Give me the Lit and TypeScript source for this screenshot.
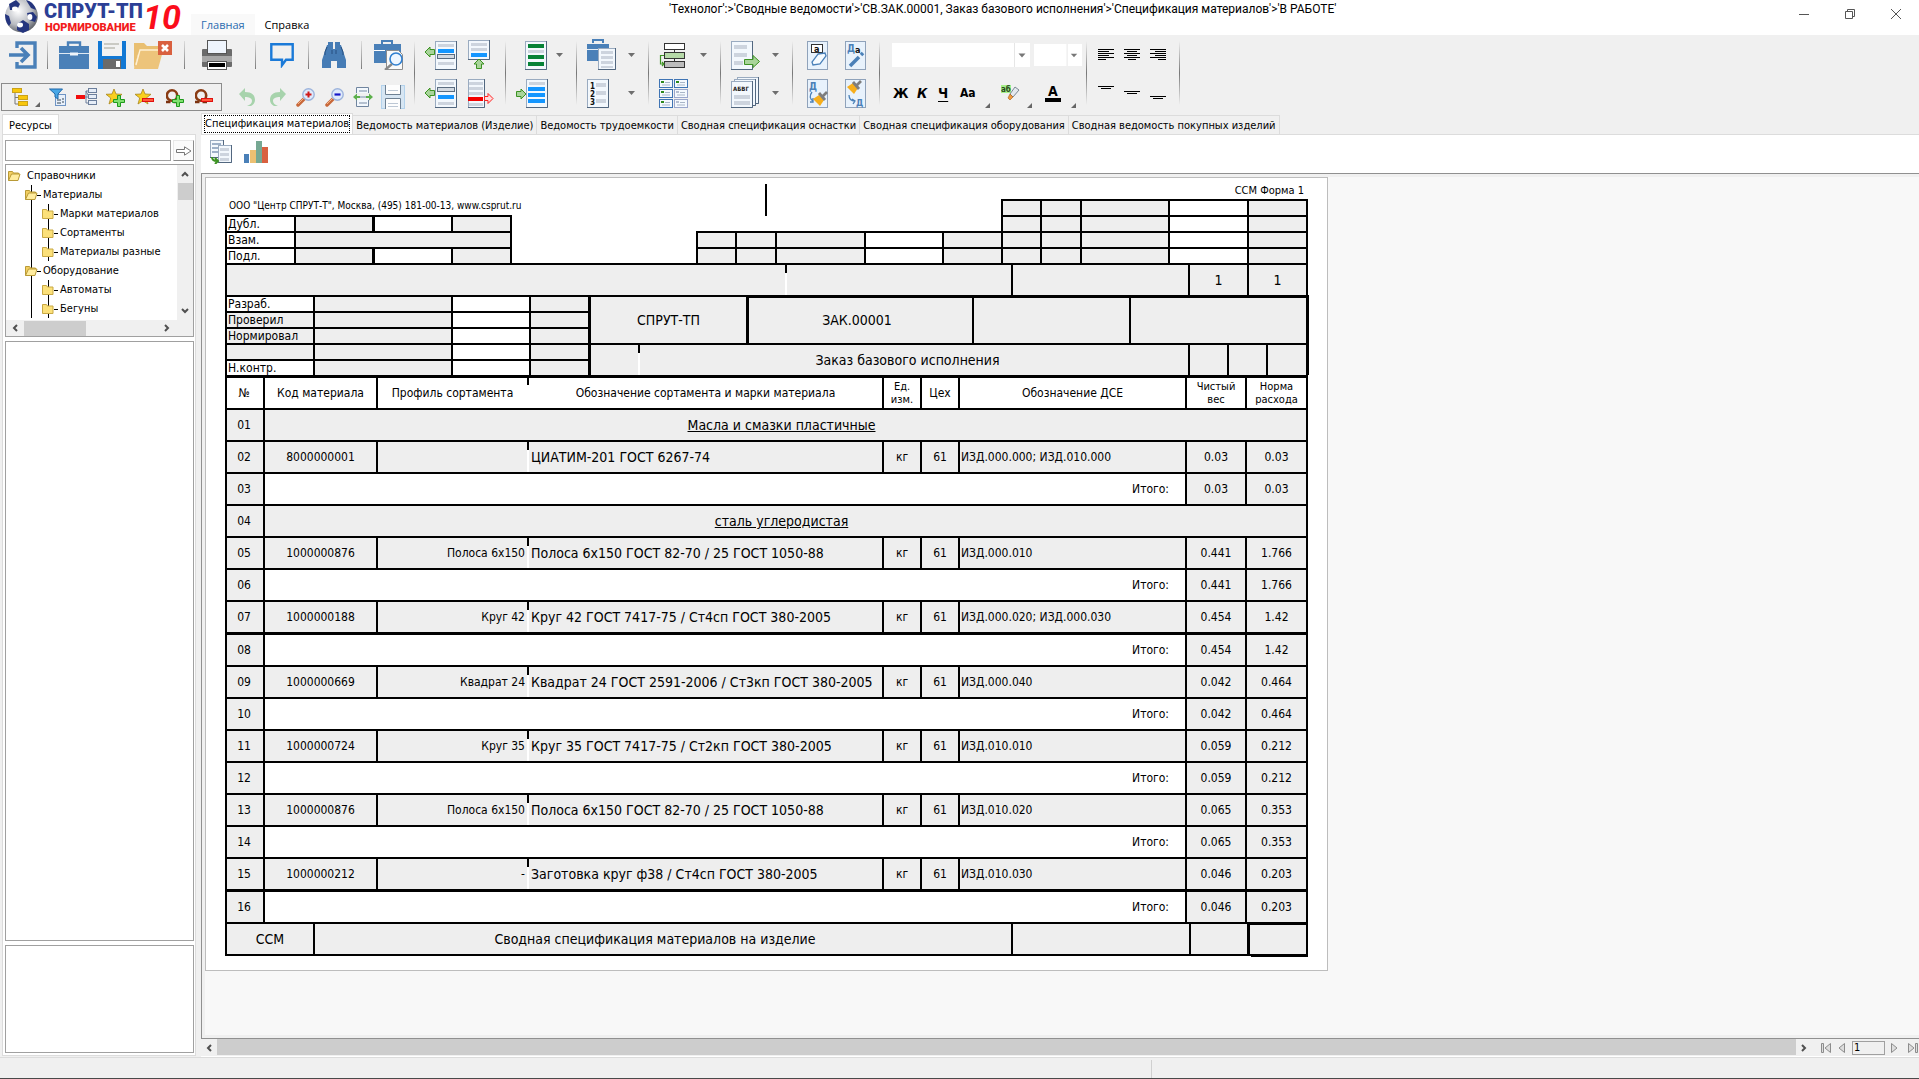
import { LitElement, html, css, svg, nothing, type TemplateResult } from "lit";
import { customElement, property, state } from "lit/decorators.js";
import { classMap } from "lit/directives/class-map.js";

type Icon = { w: number; h: number; body: TemplateResult };

/* ---------- icon drawings ---------- */

const page = (x: number, y: number, w: number, h: number) => svg`
  <rect x=${x + 0.5} y=${y + 0.5} width=${w - 1} height=${h - 1} fill="#f3f8fd" stroke="#9aabc0"/>
  <path d="M${x + w - 0.5} ${y}V${y + h - 0.5}H${x}" fill="none" stroke="#52677f"/>`;
const bar = (x: number, y: number, w: number, c = "#cdd4de", h = 3) =>
  svg`<rect x=${x} y=${y} width=${w} height=${h} fill=${c}/>`;
const greenArrow = (x: number, y: number, turn = 0) =>
  svg`<path transform="translate(${x} ${y}) rotate(${turn})" d="M-4.500 -2.500H0V-5L5 0 0 5V2.500H-4.500Z" fill="#a9d49b" stroke="#3c9222"/>`;
const plus = (x: number, y: number) =>
  svg`<path d="M${x - 1.5} ${y - 5.5}h3v4h4v3h-4v4h-3v-4h-4v-3h4z" fill="#7fe06f" stroke="#1f9a1c"/>`;
const minus = (x: number, y: number) =>
  svg`<rect x=${x - 5.5} y=${y - 1.5} width="11" height="3" fill="#ff5a3c" stroke="#e01010"/>`;
const star = svg`<path d="M8 1l2 5 6 .3-4.700 3.700 1.700 6-5-3.300L3 16l1.700-6L0 6.300 6 6z" fill="#f9cf1e" stroke="#a8861f" stroke-width=".8"/>`;
const ring = svg`<path d="M0 14h4.500M7.500 14h4.500" stroke="#7a3210" stroke-width="2.400"/><circle cx="6" cy="7.500" r="5.200" fill="none" stroke="#8a3c14" stroke-width="2.600"/>`;
const magnifier = (sign: TemplateResult) => svg`
  <path d="M2 17l7-7" stroke="#c8683a" stroke-width="3.500" stroke-linecap="round"/>
  <path d="M2 16l6-6" stroke="#f2b184" stroke-width="1"/>
  <circle cx="12.500" cy="6.500" r="5.700" fill="#dfeafb" stroke="#9db4dc" stroke-width="1.400"/>${sign}`;
const letter = (t: string, x: number, y: number, size: number, fill: string) =>
  svg`<text x=${x} y=${y} font-size=${size} font-weight="700" font-family="DejaVu Sans Condensed, sans-serif" fill=${fill}>${t}</text>`;

const icons: Record<string, Icon> = {
  exit: { w: 28, h: 28, body: svg`<path d="M8 7V2h18v24H8v-5" fill="none" stroke="#4a80b8" stroke-width="3.400"/><path d="M0 14h17M12 7l7 7-7 7" fill="none" stroke="#4a80b8" stroke-width="3.600"/>` },
  briefcase: { w: 30, h: 28, body: svg`<path d="M9 5V1.500h12V5" fill="none" stroke="#4a80b8" stroke-width="2.400"/><rect y="5" width="30" height="23" fill="#4a80b8"/><path d="M0 12.500h11M19 12.500h11" stroke="#dfe9f3"/><rect x="11" y="11.500" width="8" height="3" fill="#eef4fa"/>` },
  floppy: { w: 28, h: 28, body: svg`<path d="M0 0h28v28H0z" fill="#1278d4"/><rect x="4" width="20" height="15" fill="#f2f2f2"/><path d="M6 3h15M6 7h11" stroke="#bdbdb5" stroke-width="1.600"/><rect x="5" y="18" width="18" height="10" fill="#6a6a6a"/><rect x="18" y="20" width="4" height="6" fill="#fff"/>` },
  folderClose: { w: 38, h: 28, body: svg`<path d="M0 2h10l3 3h15v8H4L0 28z" fill="#e9bf71"/><path d="M5 10h24l-5 18H0z" fill="#edc47b"/><path d="M2 24L6 9h22" fill="none" stroke="#fff2d6" stroke-width="1.300"/><rect x="24" y="0" width="14" height="14" fill="#d9603f"/><path d="M28 4l6 6M34 4l-6 6" stroke="#fff" stroke-width="2.600"/>` },
  printer: { w: 32, h: 32, body: svg`<rect x="1" y="10" width="30" height="18" rx="1" fill="#6b6b6b"/><rect x="1" y="17" width="30" height="6" fill="#a8a8a8"/><rect x="6.500" y="1.500" width="19" height="13" fill="#eef4fc" stroke="#555"/><rect x="6.500" y="22.500" width="19" height="8" fill="#fff" stroke="#555"/><rect x="8" y="24" width="16" height="4" fill="#000"/>` },
  comment: { w: 24, h: 26, body: svg`<path d="M1.300 2.300h21.400v15.400H16l-4 5.500v-5.500H1.300z" fill="none" stroke="#1b7ad8" stroke-width="2.400"/>` },
  binoculars: { w: 24, h: 28, body: svg`<path d="M6 1h5v7h2V1h5v3h1l5 15v8h-9v-7H9v7H0v-8L5 4h1z" fill="#467cb5"/><path d="M3 14v-3l2-5M21 14v-3l-2-5M10 9v4M14 9v4" stroke="#264f80" fill="none"/>` },
  caseSearch: { w: 30, h: 30, body: svg`<path d="M8 4V1h10v3" fill="none" stroke="#4a80b8" stroke-width="2"/><rect y="4" width="27" height="19" fill="#4a80b8"/><path d="M0 10.500h11" stroke="#fff"/><path d="M12.500 10.500h12l4 4v15h-16z" fill="#fafafa" stroke="#8d8d8d"/><circle cx="22" cy="19" r="6" fill="#eef6ff" stroke="#2f7fd0" stroke-width="1.600"/><path d="M18 24l-7 6" stroke="#888" stroke-width="2.400"/>` },
  tree: { w: 17, h: 18, body: svg`<path d="M3 4v12h4M3 9.500h4" fill="none" stroke="#777"/><rect x=".5" y=".5" width="9" height="4" fill="#f8c70c" stroke="#caa21a"/><rect x="6.500" y="7.500" width="9" height="4" fill="#f8c70c" stroke="#caa21a"/><rect x="6.500" y="13.500" width="9" height="4" fill="#f8c70c" stroke="#caa21a"/>` },
  filter: { w: 17, h: 18, body: svg`<rect x="6.500" y="6.500" width="10" height="11" fill="#e8f0fa" stroke="#6f94c4"/><path d="M8 12h4M8 15h4M13 11h2M13 14h2" stroke="#345"/><path d="M.5 1h13L9 6v5L6 9V6z" fill="#49a7e6" stroke="#1e66a8"/>` },
  node: { w: 21, h: 18, body: svg`<path d="M8 9h5M13 9l-3-6h3M10 3v12h3" fill="none" stroke="#6c7f9c"/><rect y="7" width="9" height="4" fill="#f20d0d"/><g fill="#e6edf7" stroke="#6c7f9c"><rect x="12.500" y=".5" width="8" height="4"/><rect x="12.500" y="6.500" width="8" height="4"/><rect x="12.500" y="12.500" width="8" height="4"/></g>` },
  starPlus: { w: 20, h: 19, body: svg`${star}${plus(13, 13)}` },
  starMinus: { w: 20, h: 19, body: svg`${star}${minus(13, 12)}` },
  ringPlus: { w: 19, h: 19, body: svg`${ring}${plus(12, 13)}` },
  ringMinus: { w: 19, h: 19, body: svg`${ring}${minus(12, 12)}` },
  undo: { w: 18, h: 18, body: svg`<path d="M0 6l6-6v4c7 0 10 3 10 8 0 3-2 5-4 6h-4c3-1 5-3 5-5 0-3-3-4-7-4v4z" fill="#a7d3ac"/>` },
  redo: { w: 18, h: 18, body: svg`<path d="M18 6l-6-6v4C5 4 2 7 2 12c0 3 2 5 4 6h4c-3-1-5-3-5-5 0-3 3-4 7-4v4z" fill="#a7d3ac"/>` },
  zoomIn: { w: 19, h: 19, body: magnifier(svg`<path d="M9.500 6.500h6M12.500 3.500v6" stroke="#d01818" stroke-width="2"/>`) },
  zoomOut: { w: 19, h: 19, body: magnifier(svg`<path d="M9.500 6.500h6" stroke="#1616c8" stroke-width="2.200"/>`) },
  fitWidth: { w: 20, h: 20, body: svg`<path d="M3.500 6V.5h12V6M3.500 13v6.500h12V13" fill="#f3f8fd" stroke="#70859f"/><path d="M6 4h8M6 16h8M7 10h6" stroke="#b5c1d0" stroke-width="2"/><path d="M0 10l4-3.500V9h3v2H4v2.500zM20 10l-4-3.500V9h-3v2h3v2.500z" fill="#5db04c"/>` },
  fitPage: { w: 24, h: 24, body: svg`<rect x=".5" y=".5" width="23" height="23" fill="#d7e6f3" stroke="#b3d2ec"/><path d="M4.500 0v9.500h15V0M4.500 24V13.500h15V24" fill="#fdfdfd" stroke="#6d8093"/><path d="M7 5.500h10M7 18.500h10M7 21.500h10" stroke="#bcc7d4"/>` },
  rowBefore: { w: 32, h: 30, body: svg`${page(10, 1, 22, 29)}${bar(13, 4, 16)}${bar(13, 9, 16, "#1496ff", 4)}<rect x="12.500" y="14.500" width="17" height="4" fill="#d3dae2" stroke="#5a6c80"/>${bar(13, 22, 16)}${greenArrow(5, 12, 180)}` },
  rowAfter: { w: 32, h: 30, body: svg`${page(10, 1, 22, 29)}${bar(13, 4, 16)}<rect x="12.500" y="9.500" width="17" height="4" fill="#d3dae2" stroke="#5a6c80"/>${bar(13, 17, 16, "#1496ff", 4)}${bar(13, 24, 16)}${greenArrow(5, 15, 180)}` },
  rowUp: { w: 26, h: 30, body: svg`${page(0, 0, 22, 20)}${bar(3, 3, 16)}${bar(3, 8, 16)}${bar(3, 13, 16, "#1496ff", 4)}${greenArrow(11, 24, -90)}` },
  rowDelete: { w: 26, h: 30, body: svg`${page(0, 1, 17, 29)}${bar(1, 4, 14)}${bar(1, 9, 14)}${bar(1, 14, 14)}${bar(0, 19, 15, "#f40000", 4)}${bar(1, 25, 14)}<path d="M16.500 18.500H20V15.500l5 5-5 5V22.500h-3.500z" fill="#ffdcdc" stroke="#f22"/>` },
  listGreen: { w: 22, h: 30, body: svg`${page(0, 1, 22, 29)}${bar(3, 4, 16, "#078237", 4)}${bar(3, 10, 16)}${bar(3, 15, 16, "#078237", 4)}${bar(3, 22, 16, "#078237", 4)}` },
  listInsert: { w: 32, h: 30, body: svg`${page(10, 1, 22, 29)}${bar(13, 4, 16)}${bar(12, 9, 17, "#1496ff", 4)}${bar(12, 15, 17, "#1496ff", 4)}${bar(12, 21, 17, "#1496ff", 4)}${greenArrow(5, 16)}` },
  casePage: { w: 30, h: 32, body: svg`<path d="M6 4V1h10v3" fill="none" stroke="#4a80b8" stroke-width="2"/><rect y="5" width="22" height="17" fill="#4a80b8"/><path d="M0 10.500h22" stroke="#e4edf6"/>${page(11, 9, 18, 22)}${bar(14, 12, 12)}${bar(14, 17, 12)}${bar(14, 22, 12)}${bar(14, 27, 12, "#cdd4de", 2)}` },
  numbered: { w: 30, h: 30, body: svg`${page(0, 1, 22, 29)}${bar(9, 5, 10, "#cdd4de", 4)}${bar(9, 13, 10, "#cdd4de", 4)}${bar(9, 21, 10, "#cdd4de", 4)}${letter("1", 3, 11, 8, "#111")}${letter("2", 3, 19, 8, "#111")}${letter("3", 3, 27, 8, "#111")}` },
  flow: { w: 28, h: 26, body: svg`<g stroke="#333"><rect x="5.500" y="1.500" width="20" height="6" fill="#fff"/><rect x="5.500" y="10.500" width="20" height="6" fill="#b6d9a8"/><rect x="5.500" y="19.500" width="20" height="6" fill="#bcbcbc"/><path d="M15.500 7v3M15.500 16v3"/></g><path d="M5 13.500H1.500v8.500H4M3 20l2 2-2 2" fill="none" stroke="#3c9222" stroke-width="1.200"/>` },
  cards: { w: 30, h: 30, body: svg`${[0, 10, 20].map((y, r) => [0, 15].map((x, c) => svg`<rect x=${x + 0.5} y=${y + 1.5} width="13" height="8" fill="#f5f9fe" stroke=${r && c ? "#9aa7cc" : "#3f74b4"}/>${bar(x + 2, y + 3, 3, r && c ? "#b4bdd0" : "#2f8a1e", 2)}<path d="M${x + 6} ${y + 4.5}h5M${x + 3} ${y + 7}h8" stroke="#a9b6c8"/>`))}` },
  pageExport: { w: 30, h: 30, body: svg`${page(0, 1, 22, 29)}${bar(3, 5, 13, "#cdd4de", 4)}${bar(3, 13, 13, "#cdd4de", 4)}${bar(3, 21, 9, "#cdd4de", 4)}<path d="M13.500 19.500H22V15.500l6.500 6-6.500 6V24.500h-8.500z" fill="#a9d49b" stroke="#3c9222"/>` },
  pagesAbc: { w: 30, h: 32, body: svg`${page(6, 0, 22, 27)}${page(3, 2, 22, 27)}${page(0, 4, 22, 27)}${letter("АБВГ", 2, 14, 6, "#222")}${bar(3, 18, 16, "#cdd4de", 4)}${bar(3, 24, 16, "#cdd4de", 4)}` },
  eraseStyle: { w: 22, h: 30, body: svg`<rect x=".5" y="1.500" width="20" height="28" fill="#e8f2fc" stroke="#8fa2ba"/><rect x="4.500" y="4.500" width="11" height="8" fill="#fff" stroke="#333"/>${letter("а", 7, 12, 9, "#111")}<path d="M11 14l7-1 1 3-6 8-7 1-1-3z" fill="#f6fbff" stroke="#4a80b8" stroke-width="1.300"/>` },
  editStyle: { w: 22, h: 30, body: svg`<rect x=".5" y="1.500" width="20" height="28" fill="#e8f2fc" stroke="#8fa2ba"/>${letter("Д", 2, 12, 10, "#4a80b8")}${letter("а", 10, 13, 9, "#111")}<path d="M5 26l9-9" stroke="#4a80b8" stroke-width="3.600"/><path d="M16 15l2-2" stroke="#4a80b8" stroke-width="3.600"/>` },
  copyStyle: { w: 22, h: 30, body: svg`<rect x=".5" y="1.500" width="20" height="28" fill="#e8f2fc" stroke="#8fa2ba"/>${letter("Д", 2, 12, 10, "#4a80b8")}<path d="M5 14c-3 4-2 7 1 9m0-3v4H3" fill="none" stroke="#4a80b8" stroke-width="1.300"/><path d="M6 21l7 7 4-6-5-5z" fill="#f6ae1c"/><path d="M12 15l6 7M15 19l5-5" stroke="#7e7e7e" stroke-width="2.800"/>` },
  pasteStyle: { w: 22, h: 30, body: svg`<rect x=".5" y="1.500" width="20" height="28" fill="#e8f2fc" stroke="#8fa2ba"/><path d="M2 9l7 7 4-6-5-5z" fill="#f6ae1c"/><path d="M8 4l6 7M11 8l5-5" stroke="#7e7e7e" stroke-width="2.800"/><path d="M4 17c0 4 2 6 6 6m-3-2l3 2-2 3" fill="none" stroke="#4a80b8" stroke-width="1.300"/>${letter("Д", 11, 28, 9, "#4a80b8")}` },
  highlighter: { w: 19, h: 16, body: svg`<rect width="10" height="8" fill="#a6f08c"/>${letter("аб", 0, 7, 8, "#2a4a1c")}<path d="M9 9l5-7 4 3-6 7z" fill="#e4e9ee" stroke="#7b8794"/><path d="M7 13l2-4 3 3-3 3z" fill="#ef9a3c" stroke="#a45a18" stroke-width=".6"/>` },
  refresh: { w: 22, h: 24, body: svg`${page(0, 0, 14, 18)}${bar(2, 3, 9, "#9db0c8", 2)}${bar(2, 7, 6, "#9db0c8", 2)}${bar(2, 11, 6, "#9db0c8", 2)}${page(8, 5, 14, 18)}${bar(10, 8, 9)}${bar(10, 13, 9)}${bar(10, 18, 9)}<path d="M2 17c0 3 2 4 5 4M5 18l3 3-3 3" fill="none" stroke="#3c9222" stroke-width="2"/>` },
  chart: { w: 24, h: 24, body: svg`<path d="M0 14h5v9H0z" fill="#4a80b8"/><path d="M6 10h6v13H6z" fill="#ecc072"/><path d="M12 1h6v22h-6z" fill="#76a893"/><path d="M18 7h6v16h-6z" fill="#d9603f"/>` },
};

const lines = (widths: number[], align: "l" | "c" | "r", top = 0): Icon => ({
  w: 16, h: 14,
  body: svg`${widths.map((w, i) => svg`<rect x=${align === "l" ? 0 : align === "r" ? 16 - w : (16 - w) / 2} y=${top + i * 2} width=${w} height="1" fill="#000"/>`)}`,
});
icons.alignLeft = lines([16, 11, 16, 11, 16, 8], "l", 1);
icons.alignCenter = lines([16, 10, 16, 10, 16, 8], "c", 1);
icons.alignRight = lines([16, 11, 16, 11, 16, 8], "r", 1);
icons.alignTop = lines([16, 10], "c", 0);
icons.alignMiddle = lines([16, 10], "c", 5);
icons.alignBottom = lines([16, 10], "c", 10);

const draw = (name: string) => {
  const i = icons[name];
  return html`<svg width=${i.w} height=${i.h} viewBox="0 0 ${i.w} ${i.h}" aria-hidden="true">${i.body}</svg>`;
};

/* ---------- ribbon ---------- */

const tool = (icon: string, label: string, step: number) =>
  html`<button class="tool" type="button" aria-label=${label} style="width:${step}px">${draw(icon)}</button>`;
const gap = (step: number) => html`<span class="gap" style="width:${step}px"></span>`;
const shortSep = (step: number) => html`<span class="short" style="width:${step}px"></span>`;
const drop = (label: string) => html`<button class="tool drop" type="button" aria-label=${label}>
  <svg width="7" height="5" viewBox="0 0 7 5" aria-hidden="true"><path d="M0 0h7L3.500 4z" fill="#6e6e6e"/></svg></button>`;
const corner = (step: number) => html`<svg class="corner" style="width:${step}px" height="5" aria-hidden="true"><path d="M5 0v5H0z" fill="#666"/></svg>`;

const ribbonCss = css`
  :host { display: flex; height: 78px; background: #f0f0f0; }
  .section { display: grid; grid-template-rows: 40px 36px; padding-left: 10px; box-sizing: border-box; }
  .section.first { padding-left: 0; }
  .row { display: flex; align-items: center; }
  .lead { padding-left: 9px; }
  .low { padding-top: 8px; }
  .sep { width: 1px; margin: 6px 0 8px; background: linear-gradient(#f0f0f0, #777 50%, #f0f0f0); }
  .short { display: block; height: 28px; background: linear-gradient(#ddd, #7c7c7c) 0 0 / 1px 100% no-repeat; }
  .gap { display: block; }
  button { font: inherit; }
  .tool { display: flex; flex: none; align-items: center; padding: 0; border: 0; background: none; color: #000; }
  .drop { width: 20px; }
  .drop.slim { width: 17px; }
  .corner { align-self: flex-end; margin-bottom: 3px; }
  .box { display: flex; align-items: center; width: 209px; height: 26px; margin: 0 17px 0 1px; padding-left: 10px; border: 1px solid #8c8c8c; }
  .combo { display: grid; background: #fff; height: 24px; margin-right: 4px; }
  .combo.small { height: 22px; }
  .combo > * { grid-area: 1 / 1; }
  select { appearance: none; border: 0; background: none; width: 138px; padding: 0 4px; }
  .small select { width: 48px; }
  .combo svg { justify-self: end; align-self: stretch; height: 100%; pointer-events: none; }
  .char { font: bold 14px "DejaVu Sans Condensed", "DejaVu Sans", sans-serif; }
  .char.small { font-size: 12px; }
  .under { text-decoration: underline; text-underline-offset: 3px; }
  .ital { font-style: italic; }
  .ink { border-bottom: 4px solid #000; line-height: 13px; padding: 0 3px; }
`;

@customElement("app-ribbon")
export class AppRibbon extends LitElement {
  static styles = [ribbonCss];

  render() {
    const combo = (label: string, small: boolean) => html`<span class=${classMap({ combo: true, small })}>
      <select aria-label=${label}></select>
      <svg width="16" viewBox="0 0 16 24" aria-hidden="true"><path d="M.5 0v24" stroke="#e6e6e6"/><path d="M4.500 10.500h7L8 14.500z" fill="#777"/></svg></span>`;
    const char = (t: string, label: string, cls: string, step: number) =>
      html`<button class="tool char ${cls.includes("small") ? "small" : ""}" type="button" aria-label=${label} style="width:${step}px"><span class=${cls}>${t}</span></button>`;
    return html`
      <div class="section first">
        <div class="row lead">
          ${tool("exit", "Выход", 38)}${shortSep(12)}${tool("briefcase", "Открыть", 39)}${tool("floppy", "Сохранить", 36)}
          ${tool("folderClose", "Закрыть", 50)}${shortSep(17)}${tool("printer", "Печать", 54)}${shortSep(15)}
          ${tool("comment", "Комментарий", 38)}${shortSep(14)}${tool("binoculars", "Найти", 39)}${shortSep(13)}${tool("caseSearch", "Просмотр", 40)}
        </div>
        <div class="row low">
          <div class="box">
            ${tool("tree", "Дерево", 23)}${corner(14)}${tool("filter", "Фильтр", 27)}${tool("node", "Узел", 30)}
            ${tool("starPlus", "В избранное", 29)}${tool("starMinus", "Из избранного", 31)}
            ${tool("ringPlus", "Добавить", 29)}${tool("ringMinus", "Убрать", 19)}
          </div>
          ${tool("undo", "Отменить", 29)}${tool("redo", "Повторить", 28)}${tool("zoomIn", "Увеличить", 29)}
          ${tool("zoomOut", "Уменьшить", 28)}${tool("fitWidth", "По ширине", 28)}${tool("fitPage", "Страница", 24)}
        </div>
      </div>
      <span class="sep"></span>
      <div class="section">
        <div class="row">${tool("rowBefore", "Вставить выше", 43)}${tool("rowUp", "Поднять", 37)}</div>
        <div class="row">${tool("rowAfter", "Вставить ниже", 43)}${tool("rowDelete", "Удалить строку", 37)}</div>
      </div>
      <span class="sep"></span>
      <div class="section">
        <div class="row">${gap(9)}${tool("listGreen", "Список", 31)}${drop("Варианты списка")}</div>
        <div class="row">${tool("listInsert", "Вставить в список", 60)}</div>
      </div>
      <span class="sep"></span>
      <div class="section">
        <div class="row">${tool("casePage", "Документ", 41)}${drop("Варианты документа")}</div>
        <div class="row">${tool("numbered", "Нумерация", 41)}${drop("Варианты нумерации")}</div>
      </div>
      <span class="sep"></span>
      <div class="section">
        <div class="row">${tool("flow", "Маршрут", 41)}${drop("Варианты маршрута")}</div>
        <div class="row">${tool("cards", "Карточки", 41)}</div>
      </div>
      <span class="sep"></span>
      <div class="section">
        <div class="row">${tool("pageExport", "Экспорт", 41)}${drop("Варианты экспорта")}</div>
        <div class="row">${tool("pagesAbc", "Документы", 41)}${drop("Варианты документов")}</div>
      </div>
      <span class="sep"></span>
      <div class="section">
        <div class="row">${gap(4)}${tool("eraseStyle", "Очистить", 38)}${tool("editStyle", "Изменить", 34)}</div>
        <div class="row">${gap(4)}${tool("copyStyle", "Копировать формат", 38)}${tool("pasteStyle", "Вставить формат", 34)}</div>
      </div>
      <span class="sep"></span>
      <div class="section">
        <div class="row">${gap(2)}${combo("Шрифт", false)}${combo("Размер", true)}</div>
        <div class="row">${gap(3)}${char("Ж", "Полужирный", "b", 24)}${char("К", "Курсив", "ital", 21)}${char("Ч", "Подчёркнутый", "under", 22)}
          ${char("Аа", "Регистр", "small", 25)}${corner(16)}${tool("highlighter", "Выделение", 26)}${corner(18)}${char("А", "Цвет текста", "ink", 26)}${corner(6)}</div>
      </div>
      <span class="sep"></span>
      <div class="section">
        <div class="row">${gap(1)}${tool("alignLeft", "По левому краю", 26)}${tool("alignCenter", "По центру", 26)}${tool("alignRight", "По правому краю", 29)}</div>
        <div class="row">${gap(1)}${tool("alignTop", "По верху", 26)}${tool("alignMiddle", "По середине", 26)}${tool("alignBottom", "По низу", 29)}</div>
      </div>
      <span class="sep"></span>`;
  }
}

/* ---------- resource tree ---------- */

const treeItems: { level: number; text: string; open?: boolean }[] = [
  { level: 0, text: "Справочники", open: true },
  { level: 1, text: "Материалы", open: true },
  { level: 2, text: "Марки материалов" },
  { level: 2, text: "Сортаменты" },
  { level: 2, text: "Материалы разные" },
  { level: 1, text: "Оборудование", open: true },
  { level: 2, text: "Автоматы" },
  { level: 2, text: "Бегуны" },
];

@customElement("resource-panel")
export class ResourcePanel extends LitElement {
  static styles = css`
    :host { display: flex; flex-direction: column; width: 194px; margin: 1px 5px 1px 2px; font-size: 11px; }
    .tab { align-self: flex-start; margin: 0 0 -1px; padding: 0 6px; height: 21px; line-height: 18px; background: #fff; border: 1px solid #dcdcdc; border-bottom: 0; font: inherit; box-sizing: border-box; }
    .body { display: flex; flex: 1; flex-direction: column; gap: 4px; padding: 5px 1px 2px 2px; background: #fff; border: 1px solid #dcdcdc; min-height: 0; }
    .search { display: flex; gap: 2px; height: 21px; margin-bottom: -1px; }
    input { flex: 1; min-width: 0; border: 1px solid #a0a0a0; background: #fff; box-sizing: border-box; }
    .go { display: grid; place-items: center; width: 21px; padding: 0; border: 1px solid; border-color: #e8e8e8 #8c8c8c #8c8c8c #e8e8e8; background: #fbfbfb; }
    .tree { display: grid; grid-template: 155px 16px / 1fr 16px; border: 1px solid #a0a0a0; }
    ul { margin: 0; padding: 1px 0 0; list-style: none; overflow: hidden; }
    li { display: flex; height: 19px; line-height: 19px; white-space: nowrap; }
    .v, .h { display: flex; align-items: center; justify-content: space-between; background: #f0f0f0; }
    .v { flex-direction: column; padding: 5px 0; }
    .h { grid-column: 1 / 3; padding: 0 22px 0 5px; }
    .v i, .h i { display: block; background: #cdcdcd; }
    .v i { width: 15px; height: 17px; margin-bottom: 102px; }
    .h i { width: 62px; height: 15px; margin-right: 72px; }
    .list { flex: 1; border: 1px solid #a0a0a0; }
    .note { height: 106px; border: 1px solid #a0a0a0; }
  `;

  private glyph(level: number, open?: boolean) {
    const x = 2 + level * 17;
    const folder = open
      ? svg`<path d="M${x + 0.5} 14.500V5.500h4l1 1.500h5v2" fill="#f3cf62" stroke="#b99a36"/><path d="M${x + 0.5} 14.500l3-6.500h8.500l-2 6.500z" fill="#ffec9e" stroke="#b99a36"/>`
      : svg`<path d="M${x + 0.5} 14.500V5.500h4l1 1.500h5.500v7.500z" fill="#fbe07a" stroke="#c9a945"/>`;
    return html`<svg width=${[21, 37, 54][level]} height="19" aria-hidden="true">
      ${level > 0 ? svg`<path d="M25.500 0v19" stroke="#000"/>` : nothing}
      ${level > 1 ? svg`<path d="M42.500 0v19" stroke="#000"/>` : nothing}
      ${folder}
      ${level > 0 ? svg`<path d="M${x + 12} 10.500h4" stroke="#000"/>` : nothing}
    </svg>`;
  }

  render() {
    const chevron = (d: string) => html`<svg width="8" height="8" viewBox="0 0 8 8" aria-hidden="true"><path d=${d} fill="none" stroke="#505050" stroke-width="2"/></svg>`;
    return html`
      <button class="tab" type="button">Ресурсы</button>
      <div class="body">
        <div class="search">
          <input type="text" aria-label="Поиск ресурса" />
          <button class="go" type="button" aria-label="Найти">
            <svg width="16" height="10" viewBox="0 0 16 10" aria-hidden="true"><path d="M.5 3.500h8V.8L15 5 8.500 9.200V6.500h-8z" fill="#fff" stroke="#777"/></svg>
          </button>
        </div>
        <div class="tree">
          <ul>${treeItems.map((t) => html`<li>${this.glyph(t.level, t.open)}<span>${t.text}</span></li>`)}</ul>
          <div class="v">${chevron("M1 6l3-3 3 3")}<i></i>${chevron("M1 2l3 3 3-3")}</div>
          <div class="h">${chevron("M6 1L3 4l3 3")}<i></i>${chevron("M2 1l3 3-3 3")}</div>
        </div>
        <div class="list"></div>
        <div class="note"></div>
      </div>`;
  }
}

/* ---------- printed form ---------- */

type Row =
  | { kind: "group"; text: string }
  | { kind: "item"; code: string; profile: string; name: string; dse: string; net: string; rate: string }
  | { kind: "total"; net: string; rate: string; thick?: boolean };

const rows: Row[] = [
  { kind: "group", text: "Масла и смазки пластичные" },
  { kind: "item", code: "8000000001", profile: "", name: "ЦИАТИМ-201 ГОСТ 6267-74", dse: "ИЗД.000.000; ИЗД.010.000", net: "0.03", rate: "0.03" },
  { kind: "total", net: "0.03", rate: "0.03" },
  { kind: "group", text: "сталь углеродистая" },
  { kind: "item", code: "1000000876", profile: "Полоса 6х150", name: "Полоса 6х150 ГОСТ 82-70 / 25 ГОСТ 1050-88", dse: "ИЗД.000.010", net: "0.441", rate: "1.766" },
  { kind: "total", net: "0.441", rate: "1.766" },
  { kind: "item", code: "1000000188", profile: "Круг 42", name: "Круг 42 ГОСТ 7417-75 / Ст4сп ГОСТ 380-2005", dse: "ИЗД.000.020; ИЗД.000.030", net: "0.454", rate: "1.42" },
  { kind: "total", net: "0.454", rate: "1.42", thick: true },
  { kind: "item", code: "1000000669", profile: "Квадрат 24", name: "Квадрат 24 ГОСТ 2591-2006 / Ст3кп ГОСТ 380-2005", dse: "ИЗД.000.040", net: "0.042", rate: "0.464" },
  { kind: "total", net: "0.042", rate: "0.464" },
  { kind: "item", code: "1000000724", profile: "Круг 35", name: "Круг 35 ГОСТ 7417-75 / Ст2кп ГОСТ 380-2005", dse: "ИЗД.010.010", net: "0.059", rate: "0.212" },
  { kind: "total", net: "0.059", rate: "0.212" },
  { kind: "item", code: "1000000876", profile: "Полоса 6х150", name: "Полоса 6х150 ГОСТ 82-70 / 25 ГОСТ 1050-88", dse: "ИЗД.010.020", net: "0.065", rate: "0.353" },
  { kind: "total", net: "0.065", rate: "0.353" },
  { kind: "item", code: "1000000212", profile: "-", name: "Заготовка круг ф38 / Ст4сп ГОСТ 380-2005", dse: "ИЗД.010.030", net: "0.046", rate: "0.203" },
  { kind: "total", net: "0.046", rate: "0.203", thick: true },
];

@customElement("material-form")
export class MaterialForm extends LitElement {
  static styles = css`
    :host { display: block; width: fit-content; padding: 6px 19px 14px; background: #fff; border: 1px solid #bdbdbd; font-size: 12px; }
    .top { display: flex; align-items: flex-end; }
    .company { margin: 0 0 2px 4px; font-size: 10px; line-height: 14px; white-space: nowrap; }
    .left { width: 287px; margin-right: 184px; }
    .left .lines { grid-template-columns: 67px 76px 77px 57px; padding-right: 2px; }
    .mark { width: 2px; height: 32px; margin: 0 0 15px 69px; background: #000; }
    .caption { margin: 0; padding-right: 4px; text-align: right; font-size: 11px; line-height: 14px; height: 15px; }
    .lines { display: grid; gap: 2px; padding: 2px 0 0 2px; background: #000; grid-auto-rows: 14px; }
    .lines.five { grid-template-columns: 37px 38px 87px 76px 57px; }
    .lines.end { grid-template-columns: 37px 38px 86px 77px 57px; padding-right: 2px; }
    .lines > * { background: #eee; line-height: 14px; padding-left: 1px; white-space: nowrap; }
    .lines > .w { background: #fff; }
    .lines > .rest { grid-column: span 3; }
    .bold-left { box-shadow: inset 1px 0 #000; }
    .order { display: grid; grid-template-columns: 784px 175px 57px 57px; gap: 2px; padding: 2px 2px 0; background: #000; }
    .order > *, .foot > *, .subject > * { display: grid; place-items: center; background: #eee; height: 30px; font-size: 14px; }
    .tick { position: relative; }
    .tick::after { content: ""; position: absolute; top: 0; bottom: 0; width: 2px; background: linear-gradient(#000 8px, #fff 8px); }
    .order .tick::after { left: 558px; }
    .subject .tick { padding-left: 36px; }
    .subject .tick::after { left: 47px; }
    .signs { display: flex; box-shadow: 1px 0 #000; }
    .people { grid-template-columns: 86px 136px 76px 57px; }
    .titles { display: flex; flex-direction: column; gap: 2px; padding: 2px 2px 0 3px; background: #000; }
    .subject { display: grid; grid-template-columns: 597px 37px 37px 38px; gap: 2px; }
    .subject.tall { grid-template-columns: 155px 224px 155px 175px; }
    .subject.tall > * { height: 46px; }
    .subject.tall > .heavy { box-shadow: inset 0 1px #000, 0 3px #000; }
    .subject.tall > .heavy.first { box-shadow: inset 1px 1px #000, 0 3px #000; padding-right: 6px; }
    table { border-collapse: separate; border-spacing: 2px; background: #000; table-layout: fixed; width: 1083px; }
    th, td { position: relative; padding: 0; height: 30px; background: #eee; font-weight: 400; text-align: center; white-space: nowrap; line-height: 16px; }
    th { background: #fff; box-shadow: inset 0 1px #000; height: 31px; }
    tr > th:first-child { padding-right: 2px; }
    tbody th { background: #eee; box-shadow: none; height: 30px; }
    .thick > * { height: 31px; box-shadow: inset 0 1px #000; }
    .small { font-size: 11px; line-height: 13px; }
    .group { font-size: 14px; text-decoration: underline; padding-right: 8px; }
    .profile { text-align: right; padding-right: 2px; }
    .name { text-align: left; padding-left: 2px; font-size: 14px; }
    .dse { text-align: left; padding-left: 1px; }
    .total { text-align: right; padding-right: 16px; background: #fff; }
    .mid::after { content: ""; position: absolute; top: 0; bottom: 0; right: -2px; width: 2px; background: linear-gradient(#000 8px, #fff 8px); }
    .foot { display: grid; grid-template-columns: 86px 696px 176px 56px 57px; gap: 2px; padding: 0 2px 2px; background: #000; }
    .foot > .doc { padding-right: 16px; }
    .foot > .heavy { box-shadow: inset 1px 1px #000, 2px 3px #000; }
  `;

  private blank(count: number, white: number) {
    return Array.from({ length: count * 5 }, (_, i) => html`<span class=${i % 5 === white ? "w" : ""}></span>`);
  }

  private row(r: Row, i: number) {
    const no = html`<th scope="row">${String(i + 1).padStart(2, "0")}</th>`;
    if (r.kind === "group") return html`<tr>${no}<td class="group" colspan="8">${r.text}</td></tr>`;
    if (r.kind === "total")
      return html`<tr class=${r.thick ? "thick" : ""}>${no}<td class="total" colspan="6">Итого:</td><td>${r.net}</td><td>${r.rate}</td></tr>`;
    return html`<tr>${no}<td>${r.code}</td><td class="profile mid">${r.profile}</td><td class="name">${r.name}</td>
      <td>кг</td><td>61</td><td class="dse">${r.dse}</td><td>${r.net}</td><td>${r.rate}</td></tr>`;
  }

  render() {
    const people = ["Разраб.", "Проверил", "Нормировал", "", "Н.контр."];
    const cols = [36, 111, 149, 353, 36, 36, 225, 58, 59];
    return html`
      <div class="top">
        <div class="left">
          <p class="company">ООО "Центр СПРУТ-Т", Москва, (495) 181-00-13, www.csprut.ru</p>
          <div class="lines">
            <span class="w">Дубл.</span><span></span><span class="w bold-left"></span><span></span>
            <span class="w">Взам.</span><span class="rest"></span>
            <span class="w">Подл.</span><span></span><span class="w bold-left"></span><span></span>
          </div>
        </div>
        <div>
          <div class="mark"></div>
          <div class="lines five">${this.blank(2, 3)}</div>
        </div>
        <div>
          <p class="caption">ССМ Форма 1</p>
          <div class="lines end">${this.blank(4, 3)}</div>
        </div>
      </div>
      <div class="order"><span class="tick"></span><span></span><span>1</span><span>1</span></div>
      <div class="signs">
        <div class="lines people">
          ${people.map((p) => html`<span class=${p === "Разраб." || p === "Н.контр." ? "w" : ""}>${p}</span><span></span><span class="w"></span><span></span>`)}
        </div>
        <div class="titles">
          <div class="subject tall"><span>СПРУТ-ТП</span><span class="heavy first">ЗАК.00001</span><span class="heavy"></span><span class="heavy"></span></div>
          <div class="subject"><span class="tick">Заказ базового исполнения</span><span></span><span></span><span></span></div>
        </div>
      </div>
      <table>
        <colgroup>${cols.map((w) => html`<col style="width:${w}px" />`)}</colgroup>
        <thead>
          <tr>
            <th scope="col">№</th><th scope="col">Код материала</th><th scope="col" class="mid">Профиль сортамента</th>
            <th scope="col">Обозначение сортамента и марки материала</th>
            <th scope="col" class="small">Ед.<br />изм.</th><th scope="col">Цех</th><th scope="col">Обозначение ДСЕ</th>
            <th scope="col" class="small">Чистый<br />вес</th><th scope="col" class="small">Норма<br />расхода</th>
          </tr>
        </thead>
        <tbody>${rows.map((r, i) => this.row(r, i))}</tbody>
      </table>
      <div class="foot"><span>ССМ</span><span class="doc">Сводная спецификация материалов на изделие</span><span></span><span></span><span class="heavy"></span></div>`;
  }
}

/* ---------- application shell ---------- */

const tabs = [
  "Спецификация материалов",
  "Ведомость материалов (Изделие)",
  "Ведомость трудоемкости",
  "Сводная спецификация оснастки",
  "Сводная спецификация оборудования",
  "Сводная ведомость покупных изделий",
];

@customElement("app-root")
export class AppRoot extends LitElement {
  static styles = css`
    :host { display: flex; flex-direction: column; height: 100vh; overflow: hidden; background: #f0f0f0; color: #000; font: 11px "DejaVu Sans Condensed", "DejaVu Sans", sans-serif; }
    header { display: flex; flex: none; height: 35px; background: #fff; font: 11px "Open Sans", sans-serif; }
    .logo { flex: none; width: 191px; height: 35px; }
    .menu { display: flex; align-self: flex-end; }
    .menu button { height: 21px; padding: 0 10px; border: 0; background: none; font: inherit; line-height: 16px; }
    .menu .on { background: #f9f9f9; color: #2b6cb0; }
    .title { flex: 1; margin: 0 0 0 -95px; text-align: center; font: 12px Roboto, sans-serif; line-height: 18px; white-space: nowrap; }
    .window { display: flex; width: 138px; height: 28px; }
    .window button { flex: 1; display: grid; place-items: center; padding: 0; border: 0; background: none; }
    .work { display: flex; flex: 1; min-height: 0; }
    main { display: flex; flex: 1; flex-direction: column; min-width: 0; border-bottom: 1px solid #fff; }
    .tabs { display: flex; align-items: flex-end; height: 22px; margin-bottom: -1px; }
    .tabs button { height: 20px; padding: 0 3px; border: 1px solid #dcdcdc; border-left: 0; background: #f0f0f0; font: inherit; white-space: nowrap; box-sizing: border-box; }
    .tabs .on { height: 22px; padding: 0 2px 2px; background: #fff; border-left: 1px solid #dcdcdc; border-bottom: 0; }
    .tabs .on span { display: block; line-height: 16px; border: 1px dotted #000; }
    .bar { display: flex; gap: 12px; align-items: flex-start; padding: 5px 9px 0; height: 33px; background: #fff; border-top: 1px solid #dcdcdc; }
    .bar button { padding: 0; border: 0; background: none; line-height: 0; }
    .view { flex: 1; min-height: 0; padding: 3px 0 3px 3px; background: #f0f0f0; border: solid #909090; border-width: 1px 0 1px 1px; overflow: hidden; }
    .canvas { height: 100%; background: #f8f8f8; }
    .scroll { display: flex; align-items: center; height: 17px; }
    .scroll .thumb { flex: 1; align-self: stretch; margin: 0 0 1px; background: #cdcdcd; }
    .scroll button { display: grid; place-items: center; height: 16px; padding: 0; border: 0; background: none; width: 16px; }
    .pager { display: flex; align-items: center; margin-left: 9px; }
    .pager .nav { width: 17px; justify-items: start; }
    .pager .near { width: 14px; }
    .pager .last { width: 11px; }
    .pager input { width: 33px; height: 14px; box-sizing: border-box; margin: 0 6px 0 0; padding: 0 1px; border: 1px solid #a0a0a0; background: #f0f0f0; font: inherit; }
    footer { display: flex; flex: none; height: 20px; border-top: 1px solid #dcdcdc; border-bottom: 1px solid #4a4a4a; background: #f0f0f0; }
    footer span { flex: 1151; margin-top: 2px; }
    footer span + span { flex: 767; border-left: 1px solid #d0d0d0; }
  `;

  @property({ type: Number }) sheet = 1;
  @state() private active = 0;

  private logo() {
    return html`<svg class="logo" viewBox="0 0 191 35" role="img" aria-label="СПРУТ-ТП Нормирование 10">
      <defs><radialGradient id="ball" cx=".4" cy=".35" r=".7"><stop offset="0" stop-color="#fff"/><stop offset=".6" stop-color="#b9bcc2"/><stop offset="1" stop-color="#55585f"/></radialGradient></defs>
      <circle cx="21.500" cy="16" r="16.300" fill="url(#ball)"/>
      <g fill="#24357e"><path d="M9 4l7-4 4 4-3 6-7 0z"/><path d="M26 0c5 1 9 5 10 10l-5-2z"/><path d="M5 14l4 2 2 7-2 3c-3-3-4-8-4-12z"/><path d="M17 24l6-4 6 4 0 6-6 3-6-3z"/><path d="M27 13l6-1 4 5-2 5-6-2z"/></g>
      <g fill="#fff"><ellipse cx="15" cy="9" rx="3" ry="2.400"/><ellipse cx="30" cy="17" rx="2.400" ry="3"/><ellipse cx="20" cy="25" rx="3" ry="2.400"/></g>
      <text x="44" y="18" font-family="Roboto, sans-serif" font-weight="900" font-size="20" fill="#2c3f96">СПРУТ-ТП</text>
      <text x="45" y="31" font-family="Roboto, sans-serif" font-weight="900" font-size="11" fill="#f21c1c">НОРМИРОВАНИЕ</text>
      <text x="143" y="29" font-family="Roboto, sans-serif" font-weight="700" font-style="italic" font-size="34" fill="#fb0d1b">10</text>
    </svg>`;
  }

  render() {
    const glyph = (d: string, w = 10, fill = "none", stroke = "#555") =>
      html`<svg width=${w} height="12" viewBox="0 0 ${w} 12" aria-hidden="true"><path d=${d} fill=${fill} stroke=${stroke}/></svg>`;
    return html`
      <header>
        ${this.logo()}
        <nav class="menu"><button class="on" type="button">Главная</button><button type="button">Справка</button></nav>
        <h1 class="title">'Технолог':&gt;'Сводные ведомости'&gt;'СВ.ЗАК.00001, Заказ базового исполнения'&gt;'Спецификация материалов'&gt;'В РАБОТЕ'</h1>
        <div class="window">
          <button type="button" aria-label="Свернуть">${glyph("M0 6.500h10")}</button>
          <button type="button" aria-label="Восстановить">${glyph("M.5 3.500h7v7h-7zM2.500 3.500v-2h7v7h-2")}</button>
          <button type="button" aria-label="Закрыть">${glyph("M0 1l10 10M10 1L0 11")}</button>
        </div>
      </header>
      <app-ribbon></app-ribbon>
      <div class="work">
        <resource-panel></resource-panel>
        <main>
          <div class="tabs">
            ${tabs.map((t, i) => html`<button type="button" class=${i === this.active ? "on" : ""} @click=${() => (this.active = i)}><span>${t}</span></button>`)}
          </div>
          <div class="bar">
            <button type="button" aria-label="Обновить">${draw("refresh")}</button>
            <button type="button" aria-label="Диаграмма">${draw("chart")}</button>
          </div>
          <div class="view"><div class="canvas"><material-form></material-form></div></div>
          <div class="scroll">
            <button type="button" aria-label="Влево"><svg width="8" height="8" viewBox="0 0 8 8"><path d="M6 1L3 4l3 3" fill="none" stroke="#505050" stroke-width="2"/></svg></button>
            <span class="thumb"></span>
            <button type="button" aria-label="Вправо"><svg width="8" height="8" viewBox="0 0 8 8"><path d="M2 1l3 3-3 3" fill="none" stroke="#505050" stroke-width="2"/></svg></button>
            <div class="pager">
              <button class="nav" type="button" aria-label="Первый лист">${glyph("M.5 1.500h2v9h-2zM9.500 1.500v9L4 6z", 10, "#ddd", "#8c8c8c")}</button>
              <button class="nav near" type="button" aria-label="Предыдущий лист">${glyph("M6.500 1.500v9L1 6z", 8, "#ddd", "#8c8c8c")}</button>
              <input type="text" aria-label="Номер листа" .value=${String(this.sheet)} />
              <button class="nav" type="button" aria-label="Следующий лист">${glyph("M.5 1.500v9L6 6z", 8, "#ddd", "#8c8c8c")}</button>
              <button class="nav last" type="button" aria-label="Последний лист">${glyph("M7.500 1.500h2v9h-2zM.5 1.500v9L6 6z", 10, "#ddd", "#8c8c8c")}</button>
            </div>
          </div>
        </main>
      </div>
      <footer><span></span><span></span></footer>`;
  }
}
